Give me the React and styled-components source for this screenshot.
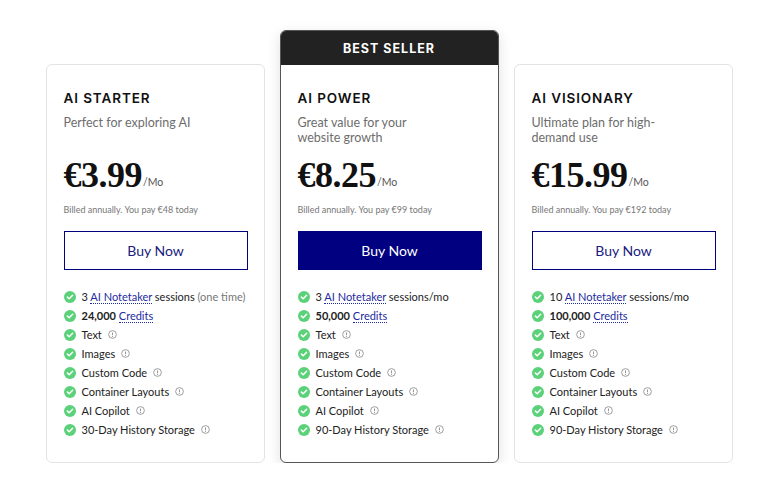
import React from "react";
import styled, { createGlobalStyle } from "styled-components";

const G = createGlobalStyle`
  body{margin:0;background:#fff;font-family:"Lato",sans-serif;}
`;
const Page = styled.div`
  display:flex;justify-content:center;align-items:flex-end;gap:15px;padding-top:30px;width:760px;box-sizing:border-box;padding-left:18px;
`;
const Card = styled.div`
  width:219px;box-sizing:border-box;border:1px solid ${p=>p.$hl?"#555":"#e3e3e3"};border-radius:6px;background:#fff;overflow:hidden;
  box-shadow:${p=>p.$hl?"0 4px 14px rgba(0,0,0,0.12)":"none"};
`;
const Banner = styled.div`
  height:34px;background:#222;color:#fff;font-weight:700;font-size:12.5px;letter-spacing:1px;display:flex;align-items:center;justify-content:center;font-family:"Inter",sans-serif;
`;
const Body = styled.div`padding:25px 16px 26px 17px;`;
const Title = styled.div`font-family:"Inter",sans-serif;font-weight:600;font-size:13.5px;letter-spacing:0.9px;color:#111;`;
const Sub = styled.div`margin-top:9px;font-size:12.5px;line-height:15px;color:#6d6d6d;height:30px;width:125px;`;
const PriceRow = styled.div`display:flex;align-items:flex-end;margin-top:11px;`;
const Price = styled.span`font-family:"Liberation Serif",serif;font-weight:700;font-size:36px;line-height:38px;color:#111;letter-spacing:-0.5px;`;
const Mo = styled.span`font-size:10.5px;color:#555;margin-left:1px;margin-bottom:6px;`;
const Billed = styled.div`font-size:9px;color:#777;margin-top:10px;`;
const Btn = styled.div`
  margin-top:16px;height:39px;box-sizing:border-box;display:flex;align-items:center;justify-content:center;font-size:14px;
  border:1px solid #000080;color:${p=>p.$fill?"#fff":"#1a1a80"};background:${p=>p.$fill?"#000080":"#fff"};
`;
const List = styled.div`margin-top:20px;display:flex;flex-direction:column;gap:6px;`;
const Item = styled.div`display:flex;align-items:center;gap:6px;font-size:11px;color:#222;height:13px;white-space:nowrap;`;
const Link = styled.span`color:#1d2a9e;border-bottom:1px dotted #1d2a9e;line-height:11px;`;
const Muted = styled.span`color:#777;`;

const Check = () => (
  <svg width="12" height="12" viewBox="0 0 12 12"><circle cx="6" cy="6" r="6" fill="#5bd27a"/><path d="M3.4 6.1l1.8 1.7 3.4-3.5" stroke="#fff" strokeWidth="1.5" fill="none" strokeLinecap="round" strokeLinejoin="round"/></svg>
);
const Info = () => (
  <svg width="9" height="9" viewBox="0 0 10 10"><circle cx="5" cy="5" r="4.3" stroke="#888" strokeWidth="0.9" fill="none"/><path d="M5 2.8v3" stroke="#888" strokeWidth="1"/><circle cx="5" cy="7.2" r="0.6" fill="#888"/></svg>
);

const plans = [
  {t:"AI STARTER",s:"Perfect for exploring AI",p:"€3.99",b:"€48",n:<>3 <Link>AI Notetaker</Link> sessions <Muted>(one time)</Muted></>,c:"24,000",h:"30"},
  {t:"AI POWER",s:"Great value for your website growth",p:"€8.25",b:"€99",n:<>3 <Link>AI Notetaker</Link> sessions/mo</>,c:"50,000",h:"90",hl:true},
  {t:"AI VISIONARY",s:"Ultimate plan for high-demand use",p:"€15.99",b:"€192",n:<>10 <Link>AI Notetaker</Link> sessions/mo</>,c:"100,000",h:"90"},
];

export default function App(){
  return (<><G/><Page>{plans.map(pl=>(
    <Card key={pl.t} $hl={pl.hl}>
      {pl.hl && <Banner>BEST SELLER</Banner>}
      <Body>
        <Title>{pl.t}</Title>
        <Sub style={{width: pl.s.length < 26 ? "auto" : undefined}}>{pl.s}</Sub>
        <PriceRow><Price>{pl.p}</Price><Mo>/Mo</Mo></PriceRow>
        <Billed>Billed annually. You pay {pl.b} today</Billed>
        <Btn $fill={pl.hl}>Buy Now</Btn>
        <List>
          <Item><Check/><span>{pl.n}</span></Item>
          <Item><Check/><span><b>{pl.c}</b> <Link>Credits</Link></span></Item>
          {["Text","Images","Custom Code","Container Layouts","AI Copilot",`${pl.h}-Day History Storage`].map(x=>(
            <Item key={x}><Check/><span>{x}</span><Info/></Item>
          ))}
        </List>
      </Body>
    </Card>))}
  </Page></>);
}
